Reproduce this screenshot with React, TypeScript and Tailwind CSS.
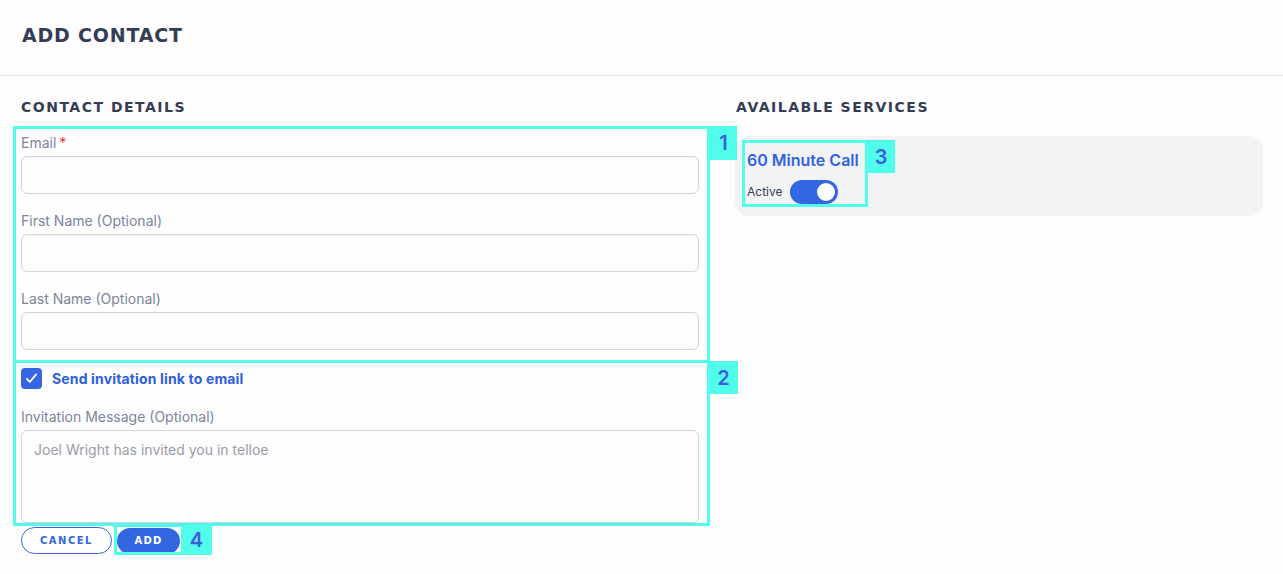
import React from "react";

const CYAN = "bg-[#50fdea]";

function Field({ label, required }: { label: string; required?: boolean }) {
  return (
    <div className="flex flex-col">
      <label className="h-[20px] text-[14px] leading-[20px] text-[#7c859b]">
        {label}
        {required && <span className="ml-[3px] text-[#e5383b]">*</span>}
      </label>
      <input
        type="text"
        className="mt-[3px] h-[38px] w-full rounded-[6px] border border-[#d3d4dd] bg-[#fdfdfd] px-3 text-[14px] shadow-[inset_0_1px_2px_rgba(0,0,0,0.04)] outline-none"
      />
    </div>
  );
}

export default function App() {
  return (
    <div className="relative min-h-[574px] w-full bg-[#fdfdfd] font-['Inter',sans-serif]">
      <header className="h-[76px] border-b border-[#e3e3e6] px-[22px] pt-[24px]">
        <h1 className="font-['DejaVu_Sans',sans-serif] text-[19px] font-bold leading-[22px] tracking-[0.8px] text-[#343d55]">
          ADD CONTACT
        </h1>
      </header>

      <main className="grid grid-cols-[678px_527px] gap-x-[37px] px-[21px] pt-[21px]">
        <section className="flex flex-col">
          <h2 className="h-[20px] font-['DejaVu_Sans',sans-serif] text-[14px] font-bold leading-[20px] tracking-[1.5px] text-[#343d55]">
            CONTACT DETAILS
          </h2>
          <div className="mt-[16px] flex flex-col gap-[17px]">
            <Field label="Email" required />
            <Field label="First Name (Optional)" />
            <Field label="Last Name (Optional)" />
          </div>

          <div className="mt-[18px] flex h-[21px] items-center gap-[10px]">
            <div className="flex h-[21px] w-[21px] items-center justify-center rounded-[4px] bg-[#3366e0]">
              <svg width="15" height="15" viewBox="0 0 24 24" fill="none" stroke="white" strokeWidth="3" strokeLinecap="round" strokeLinejoin="round">
                <path d="M4.5 12.5l4.8 5L19.5 5.5" />
              </svg>
            </div>
            <span className="text-[14px] font-bold leading-[20px] tracking-[0.15px] text-[#2f5fe0]">
              Send invitation link to email
            </span>
          </div>

          <label className="mt-[18px] h-[20px] text-[14px] leading-[20px] text-[#7c859b]">
            Invitation Message (Optional)
          </label>
          <textarea
            placeholder="Joel Wright has invited you in telloe"
            className="mt-[3px] h-[93px] w-full resize-none rounded-[6px] border border-[#d3d4dd] bg-[#fdfdfd] px-[12px] py-[9px] text-[14px] leading-[20px] text-[#4b5563] outline-none placeholder:text-[#9a9ca8]"
          />

          <div className="mt-[4px] flex items-center gap-[5px]">
            <button className="h-[27px] w-[91px] rounded-full border border-[#3366e0] bg-white font-['DejaVu_Sans',sans-serif] text-[10px] font-bold tracking-[1.5px] text-[#3366e0]">
              CANCEL
            </button>
            <button className="h-[26px] w-[63px] rounded-full bg-[#3366e0] font-['DejaVu_Sans',sans-serif] text-[10px] font-bold tracking-[1.3px] text-white">
              ADD
            </button>
          </div>
        </section>

        <section className="flex flex-col">
          <h2 className="h-[20px] font-['DejaVu_Sans',sans-serif] text-[14px] font-bold leading-[20px] tracking-[1.5px] text-[#343d55]">
            AVAILABLE SERVICES
          </h2>
          <div className="mt-[19px] -ml-[1px] h-[80px] rounded-[14px] bg-[#f2f3f5] px-[12px] pt-[12px]">
            <div className="h-[24px] text-[16px] font-semibold leading-[24px] text-[#3361e0]">
              60 Minute Call
            </div>
            <div className="mt-[8px] flex items-center gap-[8px]">
              <span className="text-[12px] leading-[16px] text-[#3a4050]">Active</span>
              <div className="flex h-[24px] w-[48px] items-center justify-end rounded-full bg-[#3366e0] px-[3px]">
                <div className="h-[18px] w-[18px] rounded-full bg-white" />
              </div>
            </div>
          </div>
        </section>
      </main>

      {/* Annotation overlays */}
      <div className="pointer-events-none absolute left-[13px] top-[126px] h-[237px] w-[697px] border-[3px] border-[#50fdea]" />
      <div className={`pointer-events-none absolute left-[710px] top-[126px] flex h-[34px] w-[27px] items-center justify-center ${CYAN} text-[20px] font-semibold text-[#3d5ce0]`}>1</div>

      <div className="pointer-events-none absolute left-[13px] top-[360px] h-[166px] w-[697px] border-[3px] border-[#50fdea]" />
      <div className={`pointer-events-none absolute left-[709px] top-[361px] flex h-[33px] w-[29px] items-center justify-center ${CYAN} text-[20px] font-semibold text-[#3d5ce0]`}>2</div>

      <div className="pointer-events-none absolute left-[742px] top-[140px] h-[67px] w-[126px] border-[3px] border-[#50fdea]" />
      <div className={`pointer-events-none absolute left-[867px] top-[140px] flex h-[33px] w-[28px] items-center justify-center ${CYAN} text-[20px] font-semibold text-[#3d5ce0]`}>3</div>

      <div className="pointer-events-none absolute left-[114px] top-[524px] h-[31px] w-[70px] border-[3px] border-[#50fdea]" />
      <div className={`pointer-events-none absolute left-[181px] top-[524px] flex h-[31px] w-[31px] items-center justify-center ${CYAN} text-[20px] font-semibold text-[#3d5ce0]`}>4</div>
    </div>
  );
}
